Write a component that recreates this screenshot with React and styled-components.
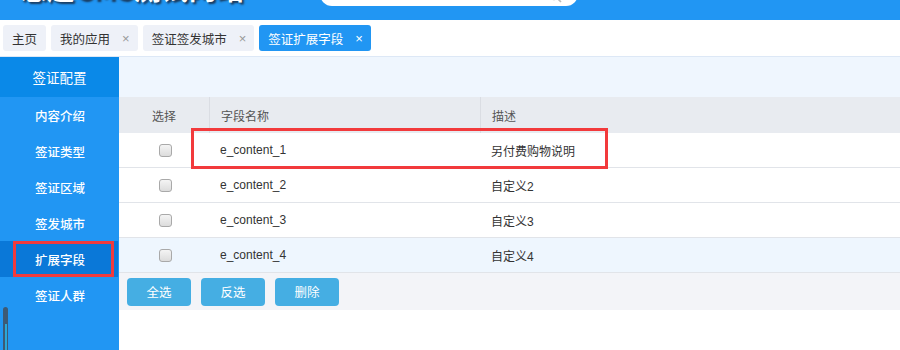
import React from 'react';
import styled, { createGlobalStyle } from 'styled-components';

const GlobalStyle = createGlobalStyle`
  html, body {
    margin: 0;
    padding: 0;
    background: #fff;
    font-family: "Liberation Sans", "Noto Sans CJK SC", sans-serif;
  }
`;

const Page = styled.div`
  width: 900px;
  height: 350px;
  overflow: hidden;
  position: relative;
`;

const Header = styled.div`
  height: 20px;
  background: #2196f3;
  overflow: hidden;
`;

const HeaderInner = styled.div`
  display: flex;
  align-items: flex-start;
  margin-top: -30px;
`;

const Title = styled.div`
  margin: 1px 0 0 20px;
  width: 280px;
  font-family: "Noto Sans CJK SC", sans-serif;
  font-size: 27px;
  letter-spacing: 0.5px;
  font-weight: 700;
  color: #fff;
  text-shadow: 2px 2px 2px #1a3a5c;
  white-space: nowrap;
  line-height: 36px;
`;

const Search = styled.div`
  margin-left: 20px;
  width: 258px;
  height: 36px;
  background: #fff;
  border-radius: 0 0 12px 12px;
  display: flex;
  align-items: flex-end;
  justify-content: flex-end;
  padding: 0 16px 3px 0;
  box-sizing: border-box;
`;

const Tabs = styled.div`
  height: 36px;
  display: flex;
  align-items: center;
  gap: 5px;
  padding: 0 3px;
  border-bottom: 1px solid #dde8f6;
`;

const Tab = styled.div`
  height: 26px;
  display: flex;
  align-items: center;
  padding: 0 ${(p) => (p.closable ? '8px' : '9px')} 0 9px;
  border-radius: 3px;
  background: ${(p) => (p.active ? '#2196f3' : '#eef1f8')};
  color: ${(p) => (p.active ? '#fff' : '#333')};
  font-family: "Noto Sans CJK SC", sans-serif;
  font-size: 12.5px;
`;

const Close = styled.span`
  margin-left: 12px;
  font-size: 13px;
  color: ${(p) => (p.active ? '#fff' : '#999')};
  font-family: "Liberation Sans", sans-serif;
`;

const Body = styled.div`
  display: flex;
  height: 293px;
`;

const Sidebar = styled.div`
  width: 119px;
  background: #2196f3;
  display: flex;
  flex-direction: column;
  position: relative;
`;

const SideHead = styled.div`
  height: 40px;
  background: #0a89e8;
  color: #fff;
  font-family: "Noto Sans CJK SC", sans-serif;
  font-size: 13.5px;
  display: flex;
  align-items: center;
  justify-content: center;
`;

const SideItem = styled.div`
  height: 36px;
  display: flex;
  align-items: center;
  padding-left: 35px;
  color: #fff;
  font-family: "Noto Sans CJK SC", sans-serif;
  font-size: 12.5px;
  font-weight: 500;
  background: ${(p) => (p.active ? '#0a78d8' : 'transparent')};
  margin-right: ${(p) => (p.active ? '1px' : '0')};
`;

const ScrollThumb = styled.div`
  position: absolute;
  left: 3px;
  top: 250px;
  bottom: 0;
  width: 5px;
  border-radius: 3px 3px 0 0;
  background: #3d5a75;
  display: flex;
  flex-direction: column;
  justify-content: flex-end;
  align-items: center;
`;

const ScrollFill = styled.div`
  width: 2px;
  height: 26px;
  background: #2aa7d8;
`;

const Main = styled.div`
  flex: 1;
  display: flex;
  flex-direction: column;
`;

const Banner = styled.div`
  height: 40px;
  background: #eff6fe;
`;

const Table = styled.div`
  display: grid;
  grid-template-columns: 90px 271px 1fr;
`;

const HeadCell = styled.div`
  height: 36px;
  background: #e8ebf0;
  display: flex;
  align-items: center;
  justify-content: ${(p) => (p.center ? 'center' : 'flex-start')};
  padding-left: ${(p) => (p.center ? '0' : '11px')};
  border-left: ${(p) => (p.divider ? '1px solid #dadde3' : 'none')};
  color: #555;
  font-family: "Noto Sans CJK SC", sans-serif;
  font-size: 12px;
`;

const Cell = styled.div`
  height: 34px;
  border-bottom: 1px solid #e1e4e9;
  background: ${(p) => (p.hover ? '#eef6fe' : '#fff')};
  display: flex;
  align-items: center;
  justify-content: ${(p) => (p.center ? 'center' : 'flex-start')};
  padding-left: ${(p) => (p.center ? '0' : '11px')};
  color: #333;
  font-family: "Liberation Sans", "Noto Sans CJK SC", sans-serif;
  font-size: 12px;
`;

const Check = styled.span`
  width: 11px;
  height: 11px;
  border: 1px solid #a9a9a9;
  border-radius: 3px;
  background: linear-gradient(#f4f4f4, #dcdcdc);
  margin-left: 2px;
`;

const Footer = styled.div`
  height: 37px;
  background: #f3f4f8;
  display: flex;
  align-items: center;
  gap: 10px;
  padding-left: 8px;
`;

const Button = styled.button`
  width: 64px;
  height: 28px;
  border: none;
  border-radius: 4px;
  background: #45aee3;
  color: #fff;
  font-family: "Noto Sans CJK SC", sans-serif;
  font-size: 12.5px;
  padding: 0;
`;

const Mark = styled.div`
  position: absolute;
  border: 3px solid #f23a3c;
  box-sizing: border-box;
`;

const tabs = [
  { label: '主页' },
  { label: '我的应用', closable: true },
  { label: '签证签发城市', closable: true },
  { label: '签证扩展字段', closable: true, active: true },
];

const menu = ['内容介绍', '签证类型', '签证区域', '签发城市', '扩展字段', '签证人群'];

const rows = [
  { name: 'e_content_1', desc: '另付费购物说明' },
  { name: 'e_content_2', desc: '自定义2' },
  { name: 'e_content_3', desc: '自定义3' },
  { name: 'e_content_4', desc: '自定义4', hover: true },
];

function SearchIcon() {
  return (
    <svg width="14" height="14" viewBox="0 0 14 14">
      <circle cx="6" cy="6" r="4.5" fill="none" stroke="#bbb" strokeWidth="1.4" />
      <line x1="9.3" y1="9.3" x2="13" y2="13" stroke="#bbb" strokeWidth="1.6" />
    </svg>
  );
}

export default function App() {
  return (
    <Page>
      <GlobalStyle />
      <Header>
        <HeaderInner>
          <Title>志趣CMS测试网站</Title>
          <Search>
            <SearchIcon />
          </Search>
        </HeaderInner>
      </Header>
      <Tabs>
        {tabs.map((t) => (
          <Tab key={t.label} active={t.active} closable={t.closable}>
            {t.label}
            {t.closable && <Close active={t.active}>×</Close>}
          </Tab>
        ))}
      </Tabs>
      <Body>
        <Sidebar>
          <SideHead>签证配置</SideHead>
          {menu.map((m) => (
            <SideItem key={m} active={m === '扩展字段'}>
              {m}
            </SideItem>
          ))}
          <ScrollThumb>
            <ScrollFill />
          </ScrollThumb>
        </Sidebar>
        <Main>
          <Banner />
          <Table>
            <HeadCell center>选择</HeadCell>
            <HeadCell divider>字段名称</HeadCell>
            <HeadCell divider>描述</HeadCell>
            {rows.map((r) => (
              <React.Fragment key={r.name}>
                <Cell center hover={r.hover}>
                  <Check />
                </Cell>
                <Cell hover={r.hover}>{r.name}</Cell>
                <Cell hover={r.hover}>{r.desc}</Cell>
              </React.Fragment>
            ))}
          </Table>
          <Footer>
            <Button>全选</Button>
            <Button>反选</Button>
            <Button>删除</Button>
          </Footer>
        </Main>
      </Body>
      <Mark style={{ left: 191, top: 128, width: 417, height: 41 }} />
      <Mark style={{ left: 13, top: 241, width: 101, height: 36 }} />
    </Page>
  );
}
